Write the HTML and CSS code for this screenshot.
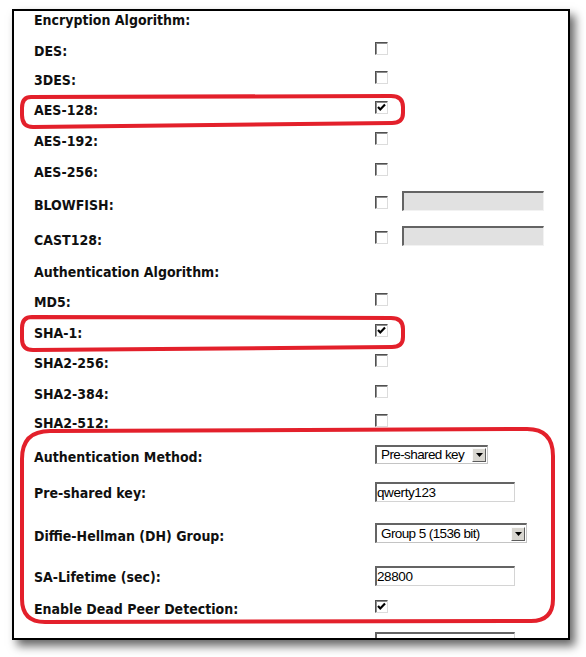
FILE: index.html
```html
<!DOCTYPE html>
<html>
<head>
<meta charset="utf-8">
<link rel="stylesheet" href="styles.css">
</head>
<body>
<div class="frame">
  <div class="form">
    <div class="lbl">Encryption Algorithm:</div><div class="ctl"></div>
    <div class="lbl">DES:</div><div class="ctl"><span class="cb"></span></div>
    <div class="lbl">3DES:</div><div class="ctl"><span class="cb"></span></div>
    <div class="lbl">AES-128:</div><div class="ctl"><span class="cb checked"><svg viewBox="0 0 11 11" class="tick"><path d="M2 5 L4.3 7.5 L9 2.6"/></svg></span></div>
    <div class="lbl">AES-192:</div><div class="ctl"><span class="cb"></span></div>
    <div class="lbl">AES-256:</div><div class="ctl"><span class="cb"></span></div>
    <div class="lbl">BLOWFISH:</div><div class="ctl"><span class="cb"></span><span class="txt disabled"></span></div>
    <div class="lbl">CAST128:</div><div class="ctl"><span class="cb"></span><span class="txt disabled"></span></div>
    <div class="lbl">Authentication Algorithm:</div><div class="ctl"></div>
    <div class="lbl">MD5:</div><div class="ctl"><span class="cb"></span></div>
    <div class="lbl">SHA-1:</div><div class="ctl"><span class="cb checked"><svg viewBox="0 0 11 11" class="tick"><path d="M2 5 L4.3 7.5 L9 2.6"/></svg></span></div>
    <div class="lbl">SHA2-256:</div><div class="ctl"><span class="cb"></span></div>
    <div class="lbl">SHA2-384:</div><div class="ctl"><span class="cb"></span></div>
    <div class="lbl">SHA2-512:</div><div class="ctl"><span class="cb"></span></div>
    <div class="lbl">Authentication Method:</div><div class="ctl"><span class="sel sel-short"><span class="sel-val">Pre-shared key</span><span class="sel-btn"><svg viewBox="0 0 7 4" class="arrow"><path d="M0 0 H7 L3.5 4 Z"/></svg></span></span></div>
    <div class="lbl">Pre-shared key:</div><div class="ctl"><span class="txt">qwerty123</span></div>
    <div class="lbl">Diffie-Hellman (DH) Group:</div><div class="ctl"><span class="sel sel-long"><span class="sel-val">Group 5 (1536 bit)</span><span class="sel-btn"><svg viewBox="0 0 7 4" class="arrow"><path d="M0 0 H7 L3.5 4 Z"/></svg></span></span></div>
    <div class="lbl">SA-Lifetime (sec):</div><div class="ctl"><span class="txt">28800</span></div>
    <div class="lbl">Enable Dead Peer Detection:</div><div class="ctl"><span class="cb checked"><svg viewBox="0 0 11 11" class="tick"><path d="M2 5 L4.3 7.5 L9 2.6"/></svg></span></div>
    <div class="lbl">Detection Period:</div><div class="ctl"><span class="txt txt-last">10</span></div>
  </div>
</div>
<svg class="marks" viewBox="0 0 586 657" width="586" height="657">
  <path d="M31 97 L391 96 Q403 96 403 107 L403 113 Q403 123 392 123 L33 127 Q22 127 22 115 L22 108 Q22 97 31 97 Z"/>
  <path d="M32 317 L391 318 Q403 318 403 329 L403 337 Q403 347 392 347 L33 350 Q22 350 22 339 L22 328 Q22 317 32 317 Z"/>
  <path d="M50 431 L527 429 Q553 429 553 456 L553 599 Q553 621 531 621 L45 622 Q22 622 22 599 L22 459 Q22 431 50 431 Z"/>
</svg>
</body>
</html>
```
FILE: styles.css
```css
html, body {
  margin: 0;
  padding: 0;
  background: #fff;
}

body {
  width: 586px;
  height: 657px;
  overflow: hidden;
  position: relative;
}

.frame {
  margin: 9px 0 0 12px;
  width: 558px;
  height: 631px;
  box-sizing: border-box;
  border: 2px solid #000;
  background: #fff;
  box-shadow: 5px 6px 9px rgba(0, 0, 0, 0.6);
  overflow: hidden;
}

.form {
  margin-top: -3px;
  padding-left: 20px;
  display: grid;
  grid-template-columns: 341px 1fr;
  grid-template-rows: 31px 29px 30px 31px 31px 33px 35px 32px 30px 31px 30px 31px 29px 34px 36px 43px 41px 32px 37px 40px;
  align-items: start;
}

.lbl {
  font-family: "DejaVu Sans Condensed", "DejaVu Sans", sans-serif;
  font-weight: bold;
  font-size: 14px;
  line-height: 24px;
  color: #101010;
  white-space: nowrap;
}

.ctl {
  display: flex;
  align-items: flex-start;
}

.cb {
  display: block;
  width: 13px;
  height: 13px;
  box-sizing: border-box;
  margin-top: 3px;
  background: #fff;
  border: 1px solid;
  border-color: #505050 #dcdcdc #dcdcdc #505050;
  box-shadow: inset 1px 1px 0 #8c8c8c;
}

.tick {
  display: block;
  width: 11px;
  height: 11px;
}

.tick path {
  fill: none;
  stroke: #000;
  stroke-width: 2.2;
}

.txt {
  display: block;
  width: 140px;
  height: 20px;
  margin-top: 1px;
  box-sizing: border-box;
  background: #fff;
  border-top: 2px solid #646464;
  border-left: 2px solid #646464;
  border-right: 1px solid #d4d4d4;
  border-bottom: 1px solid #d4d4d4;
  font-family: "Liberation Sans", Arial, sans-serif;
  font-size: 13.5px;
  line-height: 17px;
  color: #000;
  letter-spacing: -0.4px;
}

.txt-last {
  margin-top: -2px;
}

.txt.disabled {
  width: 142px;
  margin-left: 14px;
  margin-top: -2px;
  background: #e1e1e1;
  border-right-color: #f2f2f2;
  border-bottom-color: #f2f2f2;
}

.sel {
  display: flex;
  align-items: center;
  box-sizing: border-box;
  background: #fff;
  border-top: 2px solid #646464;
  border-left: 2px solid #646464;
  border-right: 1px solid #c4c4c4;
  border-bottom: 1px solid #c4c4c4;
  font-family: "Liberation Sans", Arial, sans-serif;
  font-size: 13.5px;
  color: #000;
}

.sel-short {
  width: 113px;
  height: 19px;
}

.sel-long {
  width: 152px;
  height: 20px;
  margin-top: -1px;
}

.sel-val {
  flex: 1;
  padding-left: 4px;
  line-height: 16px;
  white-space: nowrap;
  letter-spacing: -0.6px;
}

.sel-btn {
  width: 14px;
  height: 14px;
  margin-right: 1px;
  box-sizing: border-box;
  background: #d8d6d0;
  border: 1px solid;
  border-color: #fafafa #5c5c5c #5c5c5c #fafafa;
  display: flex;
  align-items: center;
  justify-content: center;
}

.arrow {
  width: 7px;
  height: 4px;
  display: block;
}

.arrow path {
  fill: #000;
}

.marks {
  position: absolute;
  left: 0;
  top: 0;
  pointer-events: none;
}

.marks path {
  fill: none;
  stroke: #e3202b;
  stroke-width: 4;
  stroke-linejoin: round;
}
```
